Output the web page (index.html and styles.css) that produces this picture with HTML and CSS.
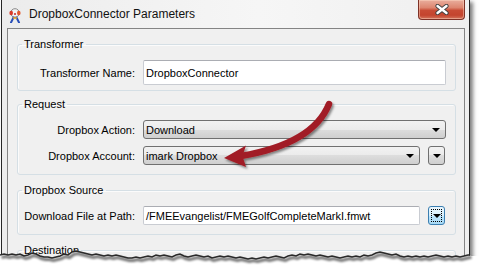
FILE: index.html
```html
<!DOCTYPE html>
<html>
<head>
<meta charset="utf-8">
<title>DropboxConnector Parameters</title>
<link rel="stylesheet" href="styles.css">
</head>
<body>
<div class="window">
  <div class="titlebar">
    <svg class="app-icon" width="14" height="15" viewBox="0 0 14 15">
      <circle cx="7" cy="5" r="4.3" fill="#f2f2f2" stroke="#8a8a8a" stroke-width="1"/>
      <ellipse cx="3.2" cy="5" rx="1.8" ry="2.2" fill="#d83a2a"/>
      <ellipse cx="10.8" cy="5" rx="1.8" ry="2.2" fill="#e4572e"/>
      <circle cx="7" cy="6" r="1" fill="#c22"/>
      <path d="M5.5 9.5 L3 14.5 M8.5 9.5 L11 14.5" stroke="#2a4fb8" stroke-width="2" stroke-linecap="round"/>
      <path d="M5 10 L9 10" stroke="#e8a020" stroke-width="1.5"/>
    </svg>
    <span class="title">DropboxConnector Parameters</span>
    <div class="close-btn">
      <svg width="14" height="11" viewBox="0 0 14 11">
        <path d="M2.5 2 L11.5 9 M11.5 2 L2.5 9" stroke="#404040" stroke-width="4.2" stroke-linecap="round"/>
        <path d="M2.5 2 L11.5 9 M11.5 2 L2.5 9" stroke="#ffffff" stroke-width="2.4" stroke-linecap="round"/>
      </svg>
    </div>
  </div>
  <div class="client">
    <fieldset class="group g-transformer">
      <legend>Transformer</legend>
      <div class="row">
        <span class="label">Transformer Name:</span>
        <div class="textbox tall">DropboxConnector</div>
      </div>
    </fieldset>
    <fieldset class="group g-request">
      <legend>Request</legend>
      <div class="row">
        <span class="label">Dropbox Action:</span>
        <div class="combo">Download<span class="tri"></span></div>
      </div>
      <div class="row">
        <span class="label">Dropbox Account:</span>
        <div class="with-btn">
          <div class="combo">imark Dropbox<span class="tri"></span></div>
          <div class="mini-btn"><span class="tri"></span></div>
        </div>
      </div>
    </fieldset>
    <fieldset class="group g-source">
      <legend>Dropbox Source</legend>
      <div class="row">
        <span class="label">Download File at Path:</span>
        <div class="with-btn">
          <div class="textbox">/FMEEvangelist/FMEGolfCompleteMarkI.fmwt</div>
          <div class="mini-btn focused"><span class="focus-ring"><span class="tri"></span></span></div>
        </div>
      </div>
    </fieldset>
    <fieldset class="group g-dest">
      <legend>Destination</legend>
    </fieldset>
  </div>
</div>

<svg class="annotation" width="479" height="265" viewBox="0 0 479 265">
  <defs>
    <filter id="arrowShadow" x="-20%" y="-20%" width="140%" height="140%">
      <feDropShadow dx="1.5" dy="2" stdDeviation="1.3" flood-color="#000" flood-opacity="0.45"/>
    </filter>
  </defs>
  <g filter="url(#arrowShadow)">
    <path d="M329 104 C 321 124 300 146 241 156" fill="none" stroke="#a11d26" stroke-width="6.5" stroke-linecap="round"/>
    <polygon points="224,158 246,145.5 242.5,156 246,167" fill="#a11d26"/>
  </g>
</svg>

<svg class="torn" width="479" height="265" viewBox="0 0 479 265">
  <defs>
    <filter id="tearShadow" x="-5%" y="-100%" width="110%" height="300%">
      <feGaussianBlur stdDeviation="1.2"/>
    </filter>
  </defs>
  <polygon fill="#ffffff" points="0,255 4,254 8,255 12,254 16,255 20,254 24,256 28,255 32,253 36,254 40,256 44,257 48,257 52,258 56,257 60,256 64,254 68,255 72,252 76,251 80,252 84,253 88,254 92,255 96,254 100,255 104,256 108,255 112,256 116,255 120,256 124,257 128,258 132,258 136,257 140,258 144,257 148,256 152,257 156,255 160,256 164,255 168,256 172,257 176,255 180,254 184,256 188,257 192,256 196,255 200,256 204,257 208,256 212,258 216,257 220,256 224,257 228,256 232,257 236,258 240,257 244,258 248,259 252,258 256,259 260,258 264,257 268,258 272,257 276,256 280,257 284,258 288,256 292,255 296,256 300,254 304,255 308,254 312,255 316,256 320,255 324,256 328,257 332,256 336,257 340,258 344,257 348,256 352,257 356,256 360,257 364,255 368,256 372,255 376,253 380,252 384,253 388,254 392,255 396,254 400,256 404,257 408,256 412,257 416,256 420,257 424,256 428,257 432,256 436,255 440,256 444,257 448,256 452,257 456,256 460,257 464,256 468,255 472,256 479,256 479,265 0,265"/>
  <polyline fill="none" stroke="#000" stroke-opacity="0.55" stroke-width="3" filter="url(#tearShadow)" transform="translate(1.5,2.5)" points="0,255 4,254 8,255 12,254 16,255 20,254 24,256 28,255 32,253 36,254 40,256 44,257 48,257 52,258 56,257 60,256 64,254 68,255 72,252 76,251 80,252 84,253 88,254 92,255 96,254 100,255 104,256 108,255 112,256 116,255 120,256 124,257 128,258 132,258 136,257 140,258 144,257 148,256 152,257 156,255 160,256 164,255 168,256 172,257 176,255 180,254 184,256 188,257 192,256 196,255 200,256 204,257 208,256 212,258 216,257 220,256 224,257 228,256 232,257 236,258 240,257 244,258 248,259 252,258 256,259 260,258 264,257 268,258 272,257 276,256 280,257 284,258 288,256 292,255 296,256 300,254 304,255 308,254 312,255 316,256 320,255 324,256 328,257 332,256 336,257 340,258 344,257 348,256 352,257 356,256 360,257 364,255 368,256 372,255 376,253 380,252 384,253 388,254 392,255 396,254 400,256 404,257 408,256 412,257 416,256 420,257 424,256 428,257 432,256 436,255 440,256 444,257 448,256 452,257 456,256 460,257 464,256 468,255 470,255"/>
  <polyline fill="none" stroke="#2a2a2a" stroke-width="1.4" points="0,255 4,254 8,255 12,254 16,255 20,254 24,256 28,255 32,253 36,254 40,256 44,257 48,257 52,258 56,257 60,256 64,254 68,255 72,252 76,251 80,252 84,253 88,254 92,255 96,254 100,255 104,256 108,255 112,256 116,255 120,256 124,257 128,258 132,258 136,257 140,258 144,257 148,256 152,257 156,255 160,256 164,255 168,256 172,257 176,255 180,254 184,256 188,257 192,256 196,255 200,256 204,257 208,256 212,258 216,257 220,256 224,257 228,256 232,257 236,258 240,257 244,258 248,259 252,258 256,259 260,258 264,257 268,258 272,257 276,256 280,257 284,258 288,256 292,255 296,256 300,254 304,255 308,254 312,255 316,256 320,255 324,256 328,257 332,256 336,257 340,258 344,257 348,256 352,257 356,256 360,257 364,255 368,256 372,255 376,253 380,252 384,253 388,254 392,255 396,254 400,256 404,257 408,256 412,257 416,256 420,257 424,256 428,257 432,256 436,255 440,256 444,257 448,256 452,257 456,256 460,257 464,256 468,255 470,255"/>
</svg>
</body>
</html>
```
FILE: styles.css
```css
* { box-sizing: border-box; }

html, body {
  margin: 0;
  padding: 0;
}

body {
  width: 479px;
  height: 265px;
  overflow: hidden;
  position: relative;
  background: #ffffff;
  font-family: "Liberation Sans", Arial, sans-serif;
  font-size: 11px;
  color: #000;
}

.window {
  margin-left: 1px;
  width: 469px;
  height: 300px;
  border: 1px solid #262626;
  border-top: none;
  background: linear-gradient(to right, #ececec 0%, #f6f6f6 55%, #efefef 100%);
  padding: 0 4px 0 5px;
  box-shadow: 3px 2px 4px rgba(0, 0, 0, 0.5);
  display: flex;
  flex-direction: column;
}

.titlebar {
  height: 28px;
  flex: none;
  display: flex;
  align-items: flex-start;
}

.app-icon {
  margin: 8px 0 0 1px;
  flex: none;
}

.title {
  margin: 6px 0 0 7px;
  font-size: 12px;
  line-height: 16px;
  color: #111;
}

.close-btn {
  margin-left: auto;
  width: 47px;
  height: 20px;
  border: 1px solid #7d3126;
  border-top: none;
  border-radius: 0 0 4px 4px;
  background: linear-gradient(#e9ae9d 0%, #dd8670 40%, #c84b34 55%, #c4442e 80%, #d3745c 100%);
  box-shadow: inset 0 0 0 1px rgba(255, 220, 200, 0.45);
  display: flex;
  align-items: center;
  justify-content: center;
}

.client {
  flex: 1;
  border: 1px solid #848484;
  background: #f0f0f0;
  padding: 7px 8px 0 9px;
}

.group {
  margin: 0;
  border: 1px solid #d5dfe5;
  border-radius: 3px;
  padding: 8px 9px 9px 0;
  min-width: 0;
  box-shadow: inset 1px 1px 0 #fbfbfb;
}

.group legend {
  margin-left: 4px;
  padding: 0 2px;
  height: 16px;
  line-height: 16px;
}

.g-transformer { padding-bottom: 5px; }
.g-request { margin-top: 5px; }
.g-source { margin-top: 7px; }
.g-dest { margin-top: 7px; height: 40px; }

.row {
  display: grid;
  grid-template-columns: 117px 1fr;
  column-gap: 8px;
  align-items: center;
}

.row + .row { margin-top: 7px; }

.label {
  text-align: right;
  white-space: nowrap;
}

.textbox {
  height: 19px;
  background: #fff;
  border: 1px solid #c9ccd2;
  border-top-color: #abadb3;
  border-radius: 2px;
  padding-left: 2px;
  display: flex;
  align-items: center;
  white-space: nowrap;
  overflow: hidden;
}

.textbox.tall { height: 25px; }

.combo {
  height: 19px;
  border: 1px solid #707070;
  border-radius: 3px;
  background: linear-gradient(#f2f2f2 0%, #ebebeb 50%, #dddddd 50%, #cfcfcf 100%);
  padding-left: 2px;
  display: flex;
  align-items: center;
  white-space: nowrap;
}

.combo .tri {
  margin-left: auto;
  margin-right: 5px;
}

.tri {
  width: 0;
  height: 0;
  border-left: 4px solid transparent;
  border-right: 4px solid transparent;
  border-top: 4px solid #000;
  flex: none;
}

.with-btn {
  display: grid;
  grid-template-columns: 277px 17px;
  column-gap: 8px;
}

.mini-btn {
  height: 19px;
  border: 1px solid #707070;
  border-radius: 3px;
  background: linear-gradient(#f2f2f2 0%, #ebebeb 50%, #dddddd 50%, #cfcfcf 100%);
  display: flex;
  align-items: center;
  justify-content: center;
}

.mini-btn.focused {
  border-color: #3c7fb1;
  background: linear-gradient(#eaf6fd 0%, #d9f0fc 50%, #bee6fd 50%, #a7d9f5 100%);
  padding: 2px;
}

.focus-ring {
  width: 100%;
  height: 100%;
  border: 1px dotted #000;
  display: flex;
  align-items: center;
  justify-content: center;
}

.annotation,
.torn {
  position: absolute;
  left: 0;
  top: 0;
  pointer-events: none;
}
```
